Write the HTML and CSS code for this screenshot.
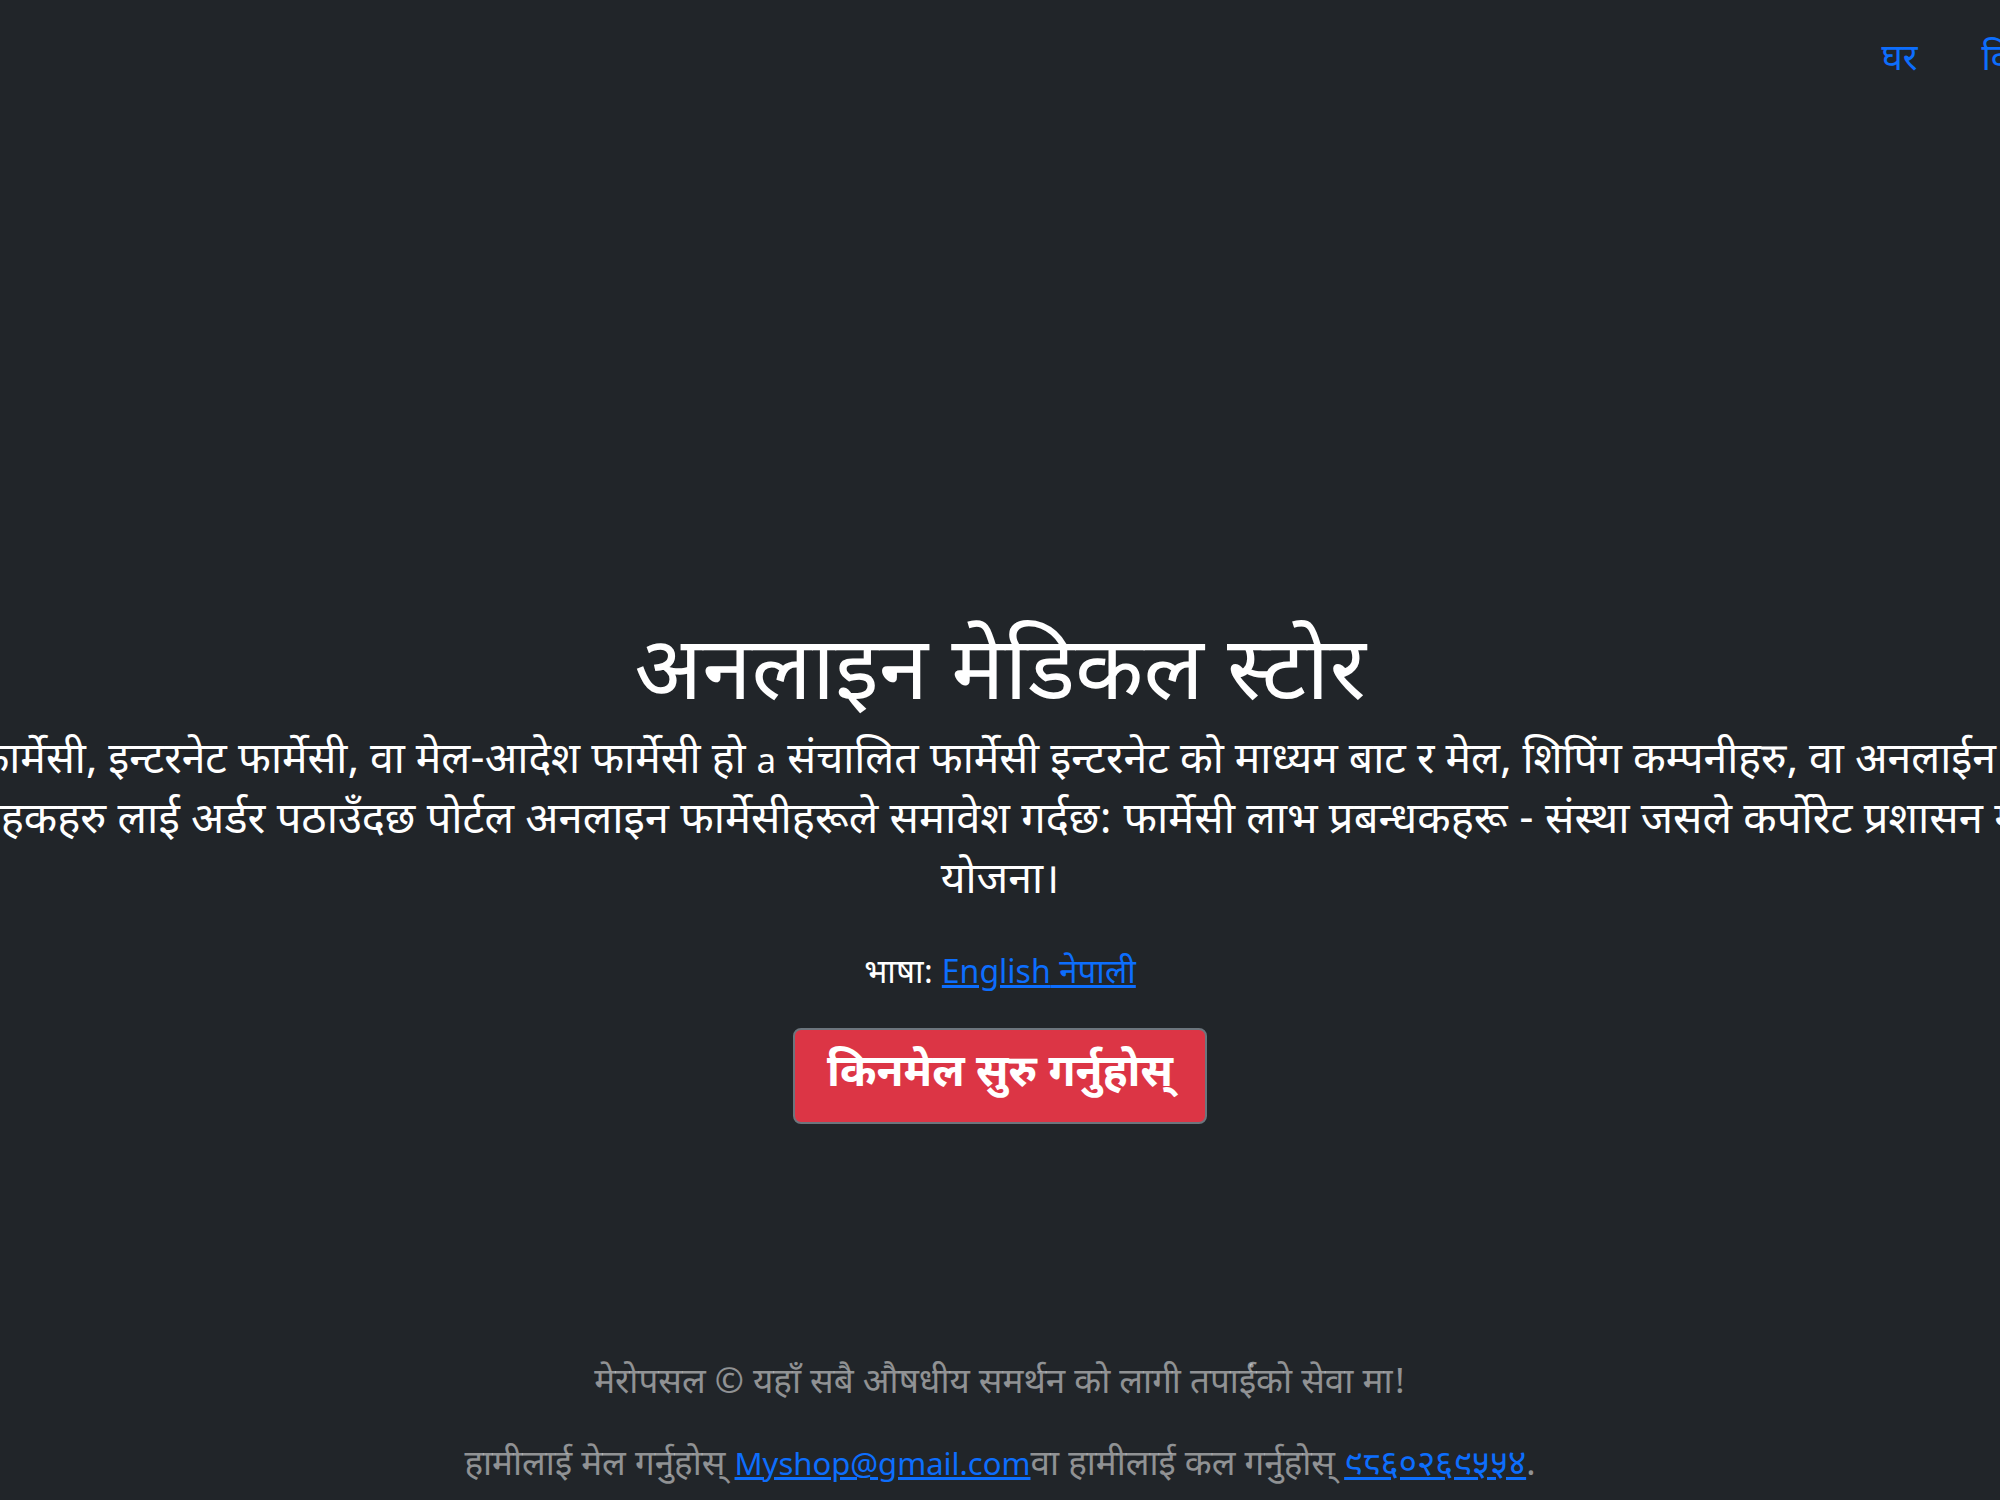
FILE: index.html
```html
<!DOCTYPE html>
<html lang="ne">
<head>
<meta charset="utf-8">
<title>अनलाइन मेडिकल स्टोर</title>
<link rel="stylesheet" href="styles.css">
</head>
<body>
<div class="cover">
  <header class="masthead">
    <nav class="nav">
      <a class="nav-link" href="#">घर</a>
      <a class="nav-link" href="#">विशेषताहरू</a>
      <a class="nav-link" href="#">सम्पर्क</a>
    </nav>
  </header>
  <main class="hero">
    <h1 class="title">अनलाइन मेडिकल स्टोर</h1>
    <p class="lead"><span class="line">अनलाइन फार्मेसी, इन्टरनेट फार्मेसी, वा मेल-आदेश फार्मेसी हो <span class="latin-sm">a</span> संचालित फार्मेसी इन्टरनेट को माध्यम बाट र मेल, शिपिंग कम्पनीहरु, वा अनलाईन फार्मेसी वेब</span><span class="line line-wide">पोर्टल मार्फत ग्राहकहरु लाई अर्डर पठाउँदछ पोर्टल अनलाइन फार्मेसीहरूले समावेश गर्दछ: फार्मेसी लाभ प्रबन्धकहरू - संस्था जसले कर्पोरेट प्रशासन गर्ने स्वास्थ्य सेवा</span><span class="line">योजना।</span></p>
    <p class="lang">भाषा: <a class="lang-link" href="#"><span class="latin">English</span> नेपाली</a></p>
    <a class="btn-shop" href="#">किनमेल सुरु गर्नुहोस्</a>
  </main>
  <footer class="foot">
    <p>मेरोपसल © यहाँ सबै औषधीय समर्थन को लागी तपाईंको सेवा मा!</p>
    <p>हामीलाई मेल गर्नुहोस् <a class="latin-link" href="#">Myshop@gmail.com</a>वा हामीलाई कल गर्नुहोस् <a class="num-link" href="#">९८६०२६९५५४</a>.</p>
  </footer>
</div>
</body>
</html>
```

FILE: styles.css
```css
html, body {
  margin: 0;
  padding: 0;
}
body {
  background: #212529;
  color: #fff;
  font-family: "Nirmala UI", "Noto Sans Devanagari", "Lohit Devanagari", "Noto Sans", sans-serif;
  font-size: 35px;
  line-height: 48px;
  min-height: 1500px;
  overflow: hidden;
  display: flex;
  justify-content: center;
}
a {
  color: #0d6efd;
}
.latin, .latin-link, .latin-sm, .lang-link, .num-link {
  line-height: 1;
}
.latin, .latin-link {
  font-family: "Noto Sans", "Open Sans", sans-serif;
  font-size: 32px;
}
.latin-link {
  font-size: 31px;
}
.latin-sm {
  font-family: "Noto Sans", sans-serif;
  font-size: 35px;
}
.cover {
  flex: 0 0 auto;
  width: 2690px;
  padding: 38px 32px 32px;
  box-sizing: border-box;
  display: flex;
  flex-direction: column;
}
.masthead {
  display: flex;
  justify-content: flex-end;
}
.nav {
  display: flex;
}
.nav-link {
  padding: 0 32px;
  font-size: 36px;
  line-height: 48px;
  text-decoration: none;
  color: #0d6efd;
}
.hero {
  margin-top: 543px;
  display: flex;
  flex-direction: column;
  align-items: center;
  text-align: center;
}
.title {
  font-size: 89px;
  font-weight: 400;
  line-height: 96px;
  margin: 0 0 8px;
}
.lead {
  font-size: 42.7px;
  line-height: 60px;
  font-weight: 400;
  white-space: nowrap;
  margin: 0 0 38px;
}
.line {
  display: block;
  height: 60px;
}
.line-wide {
  font-size: 43.5px;
}
.lang {
  margin: 0 0 29px;
  line-height: 48px;
  font-size: 33px;
}
.btn-shop {
  display: inline-block;
  background: #dc3545;
  color: #fff;
  font-size: 44px;
  font-weight: 700;
  line-height: 60px;
  padding: 16px 32px;
  border: 2px solid #6c757d;
  border-radius: 8px;
  text-decoration: none;
}
.foot {
  margin-top: 237px;
  text-align: center;
  color: rgba(255, 255, 255, 0.5);
}
.foot p {
  margin: 0 0 34px;
}
```
